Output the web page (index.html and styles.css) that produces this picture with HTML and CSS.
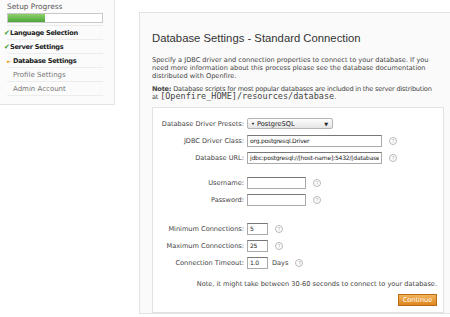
FILE: index.html
```html
<!DOCTYPE html>
<html lang="en">
<head>
    <meta charset="UTF-8">
    <title>Openfire Setup - Database Settings</title>
    <link rel="stylesheet" href="styles.css">
</head>
<body>
<div class="setup-page">
    <div class="setup-sidebar">
        <div class="progress-title">Setup Progress</div>
        <div class="progress-bar"><div class="progress-fill"></div></div>
        <ul class="step-list">
            <li class="step-done"><span class="step-mark">&#10004;</span>Language Selection</li>
            <li class="step-done"><span class="step-mark">&#10004;</span>Server Settings</li>
            <li class="step-current"><span class="step-mark">&#9658;</span>Database Settings</li>
            <li>Profile Settings</li>
            <li>Admin Account</li>
        </ul>
    </div><!--侧边栏-->

    <div class="setup-content">
        <h1 class="content-title">Database Settings - Standard Connection</h1>
        <p class="content-text">Specify a JDBC driver and connection properties to connect to your database. If you need more information about this process please see the database documentation distributed with Openfire.</p>
        <p class="content-text content-note"><b>Note:</b> Database scripts for most popular databases are included in the server distribution at&nbsp;<tt>[Openfire_HOME]/resources/database</tt>.</p>

        <div class="form-box">
            <div class="form-row">
                <label>Database Driver Presets:</label>
                <div class="fake-select"><span>&bull; PostgreSQL</span><span class="select-arrow">&#9660;</span></div>
            </div>
            <div class="form-row">
                <label>JDBC Driver Class:</label>
                <input type="text" class="input-long" value="org.postgresql.Driver">
                <span class="help-icon">?</span>
            </div>
            <div class="form-row">
                <label>Database URL:</label>
                <input type="text" class="input-long" value="jdbc:postgresql://[host-name]:5432/[database-name]">
                <span class="help-icon">?</span>
            </div>

            <div class="form-gap"></div>
            <div class="form-row">
                <label>Username:</label>
                <input type="text" class="input-mid">
                <span class="help-icon">?</span>
            </div>
            <div class="form-row">
                <label>Password:</label>
                <input type="password" class="input-mid">
                <span class="help-icon">?</span>
            </div>

            <div class="form-gap form-gap-big"></div>
            <div class="form-row">
                <label>Minimum Connections:</label>
                <input type="text" class="input-short" value="5">
                <span class="help-icon">?</span>
            </div>
            <div class="form-row">
                <label>Maximum Connections:</label>
                <input type="text" class="input-short" value="25">
                <span class="help-icon">?</span>
            </div>
            <div class="form-row">
                <label>Connection Timeout:</label>
                <input type="text" class="input-short" value="1.0">
                <span class="unit">Days</span>
                <span class="help-icon">?</span>
            </div>

            <div class="form-note">Note, it might take between 30-60 seconds to connect to your database.</div>
            <div class="form-actions"><a href="javascript:void(0);" class="btn-continue">Continue</a></div>
        </div>
    </div>
</div>
</body>
</html>
```

FILE: styles.css
```css
html, body {
    margin: 0px;
    padding: 0px;
    background: #ffffff;
    overflow: hidden;
}

body {
    font-family: "DejaVu Sans", Verdana, sans-serif;
    font-size: 6.6px;
    color: #333333;
}

ul, li, p, h1, div {
    margin: 0px;
    padding: 0px;
}

.setup-page {
    display: flex;
    align-items: flex-start;
}

/* 侧边栏 */
.setup-sidebar {
    flex: none;
    width: 115px;
    height: 105px;
    box-sizing: border-box;
    padding: 3px 11px 0px 7px;
    background: #fbfbfb;
    border-right: 1px solid #e4e4e4;
    border-bottom: 1px solid #e4e4e4;
}

.progress-title {
    height: 8px;
    line-height: 8px;
    font-size: 7.4px;
    color: #555555;
}

.progress-bar {
    height: 8px;
    margin-top: 2px;
    border: 1px solid #c8c8c8;
    background: #ffffff;
}

.progress-fill {
    width: 37px;
    height: 100%;
    background: linear-gradient(#8fd06c, #4ea43a);
}

.step-list {
    list-style: none;
    margin-top: 2px;
    border-top: 1px solid #ececec;
}

.step-list li {
    height: 13px;
    line-height: 14px;
    padding-left: 6px;
    border-bottom: 1px solid #ececec;
    font-size: 7px;
    color: #777777;
}

.step-list li.step-done,
.step-list li.step-current {
    color: #222222;
    font-weight: bold;
    font-size: 6.6px;
    letter-spacing: -0.3px;
}

.step-list li.step-done {
    padding-left: 0px;
}

.step-mark {
    display: inline-block;
    width: 6px;
    font-size: 7px;
    letter-spacing: 0px;
}

.step-done .step-mark {
    color: #3c9a2c;
    margin-left: -3px;
}

.step-current .step-mark {
    margin-left: -6px;
    width: 6px;
    font-size: 5px;
    color: #e8a020;
}

/* 主区域 */
.setup-content {
    flex: none;
    width: 292px;
    margin: 12px 0px 0px 24px;
    padding: 0px 12px 0px 12px;
    background: #fafafa;
    border: 1px solid #e2e2e2;
}

.content-title {
    margin: 17px 0px 10px 0px;
    font-family: "Liberation Sans", Arial, sans-serif;
    font-size: 11.3px;
    font-weight: normal;
    color: #333333;
    line-height: 16px;
}

.content-text {
    margin-bottom: 5px;
    line-height: 8px;
    color: #444444;
}

.content-note {
    letter-spacing: -0.2px;
}

.content-text tt {
    font-family: "DejaVu Sans Mono", monospace;
    font-size: 8.5px;
    line-height: 7px;
    letter-spacing: 0px;
}

.form-box {
    margin-top: 6px;
    padding: 7px 6px 6px 0px;
    background: #ffffff;
    border: 1px solid #e2e2e2;
}

.form-row {
    display: flex;
    align-items: center;
    height: 17px;
}

.form-row label {
    flex: none;
    width: 91px;
    padding-right: 3px;
    text-align: right;
    color: #444444;
}

.form-gap {
    height: 8px;
}

.form-gap-big {
    height: 12px;
}

.form-row input {
    box-sizing: border-box;
    height: 12px;
    margin: 0px;
    padding: 0px 2px;
    border: 1px solid #aaaaaa;
    border-top-color: #777777;
    font-family: "DejaVu Sans", sans-serif;
    font-size: 6px;
    letter-spacing: -0.2px;
    color: #222222;
}

.input-long {
    width: 135px;
}

.input-mid {
    width: 59px;
}

.input-short {
    width: 21px;
}

.fake-select {
    display: flex;
    justify-content: space-between;
    align-items: center;
    box-sizing: border-box;
    width: 86px;
    height: 11px;
    padding: 0px 4px 0px 3px;
    border: 1px solid #b5b5b5;
    border-radius: 2px;
    background: linear-gradient(#fdfdfd, #e4e4e4);
    color: #222222;
}

.select-arrow {
    font-size: 5px;
}

.unit {
    margin-left: 4px;
    color: #444444;
}

.help-icon {
    display: inline-block;
    box-sizing: border-box;
    width: 8px;
    height: 8px;
    margin-left: 7px;
    border: 1px solid #b8b8b8;
    border-radius: 50%;
    font-size: 5px;
    line-height: 6px;
    text-align: center;
    color: #999999;
}

.form-note {
    margin-top: 9px;
    line-height: 8px;
    text-align: right;
    color: #444444;
}

.form-actions {
    margin-top: 6px;
    height: 12px;
    text-align: right;
}

.btn-continue {
    display: inline-block;
    width: 39px;
    height: 12px;
    box-sizing: border-box;
    line-height: 10px;
    border: 1px solid #b86a16;
    background: linear-gradient(#f3b25a, #dd861f);
    color: #ffffff;
    text-align: center;
    text-decoration: none;
    vertical-align: top;
}
```
